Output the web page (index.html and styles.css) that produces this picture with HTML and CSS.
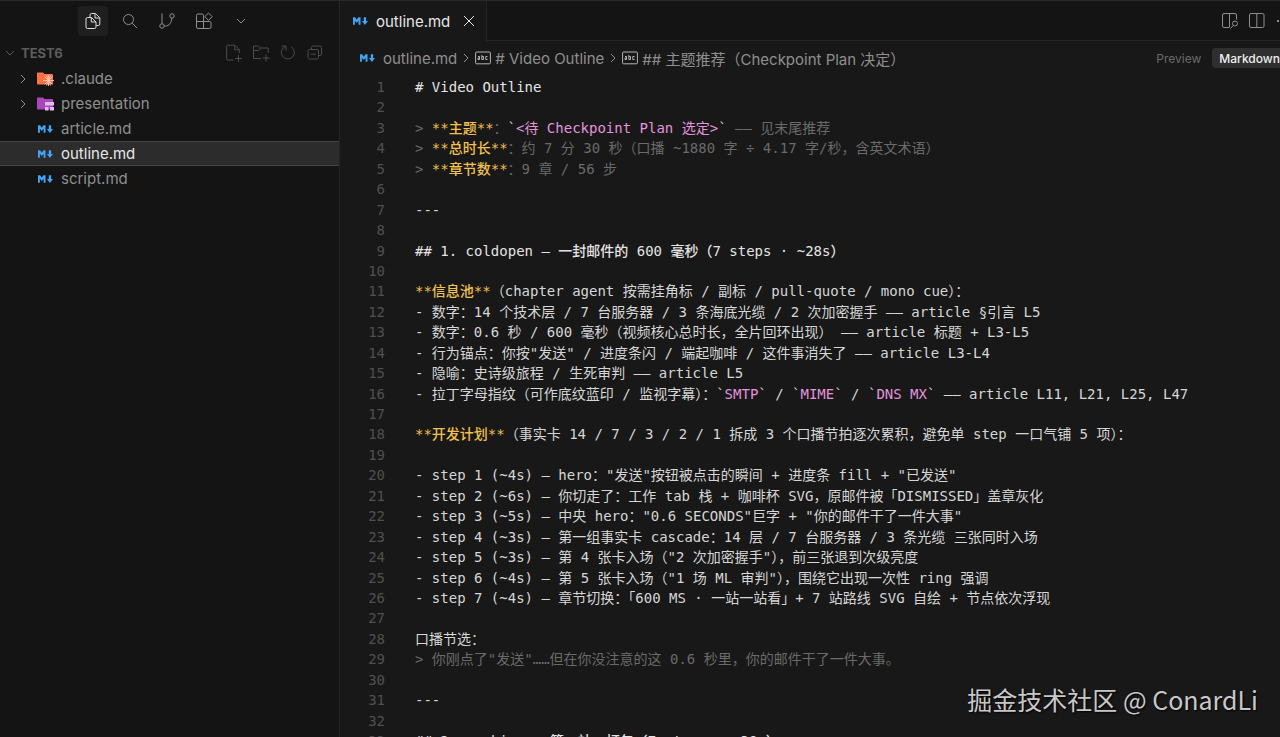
FILE: index.html
```html
<!DOCTYPE html>
<html lang="zh-CN">
<head>
    <meta charset="UTF-8">
    <meta name="viewport" content="width=device-width, initial-scale=1.0">
    <title>outline.md - test6</title>
    <link rel="stylesheet" href="styles.css">
</head>
<body>
    <!-- Shared icons -->
    <svg class="icon-defs" aria-hidden="true">
        <symbol id="icon-md" viewBox="0 0 16 10">
            <path d="M0 9V1h2.2L4 3.6 5.8 1H8v8H6V4.6L4 7.2 2 4.6V9z"/>
            <path d="M11.500 1h2.500v4h2l-3.300 4.200L9.500 5h2z"/>
        </symbol>
        <symbol id="icon-chevron" viewBox="0 0 10 10">
            <path d="M3 1l4 4-4 4"/>
        </symbol>
        <symbol id="icon-abc" viewBox="0 0 16 14">
            <rect x="0.600" y="1" width="14.800" height="11.800" rx="1"/>
            <path d="M3 5.500h1.500v3H3V7h1.500M6.800 4v4.500h1.700v-3H6.800M12.500 5.500h-1.700v3h1.700"/>
        </symbol>
    </svg>

    <div class="workbench">
        <aside class="sidebar">
            <nav class="activity-bar" aria-label="Views">
                <button class="activity active" aria-label="Explorer">
                    <svg class="icon-lg" viewBox="0 0 18 18">
                        <path d="M6 5V3A1.500 1.500 0 0 1 7.500 1.500h4l4.300 4.300V12a1.500 1.500 0 0 1-1.500 1.500h-2M11 1.700v4.300H15.500"/>
                        <path d="M3.500 5.500h4l4.500 4.500v5A1.500 1.500 0 0 1 10.500 16.500h-7A1.500 1.500 0 0 1 2 15V7a1.500 1.500 0 0 1 1.500-1.500zM7.300 5.700V10h4.500"/>
                    </svg>
                </button>
                <button class="activity" aria-label="Search">
                    <svg class="icon-lg" viewBox="0 0 18 18">
                        <circle cx="7.500" cy="7.500" r="5"/>
                        <path d="M11.200 11.200l5 5"/>
                    </svg>
                </button>
                <button class="activity" aria-label="Source Control">
                    <svg class="icon-lg" viewBox="0 0 18 18">
                        <circle cx="4" cy="14" r="2.200"/>
                        <circle cx="14" cy="4" r="2.200"/>
                        <path d="M4 1.500v10.300M6.200 14h1.300C11 14 13.500 11 13.800 6.200"/>
                    </svg>
                </button>
                <button class="activity" aria-label="Extensions">
                    <svg class="icon-lg" viewBox="0 0 18 18">
                        <path d="M8.500 9.500V3.200A1.200 1.200 0 0 0 7.300 2H3A1.500 1.500 0 0 0 1.500 3.500v11.500A1.500 1.500 0 0 0 3 16.500h11.500A1.500 1.500 0 0 0 16 15v-4.300A1.200 1.200 0 0 0 14.800 9.500H1.500M8.500 9.500v7"/>
                        <path d="M13.500 1l3.700 3.700-3.700 3.700-3.700-3.700z"/>
                    </svg>
                </button>
                <button class="activity" aria-label="More views">
                    <svg class="icon-sm chevron-down" viewBox="0 0 10 10"><use href="#icon-chevron"/></svg>
                </button>
            </nav>

            <header class="section-header">
                <svg class="icon-sm chevron-down" viewBox="0 0 10 10"><use href="#icon-chevron"/></svg>
                <h2>TEST6</h2>
                <div class="section-actions">
                    <button aria-label="New File">
                        <svg class="icon-lg" viewBox="0 0 18 18">
                            <path d="M8.500 16H2.700A1 1 0 0 1 1.700 15V2.200a1 1 0 0 1 1-1H10l4.300 4.300V9M9.700 1.500v4.300h4.500M13.500 11v7M10 14.500h7"/>
                        </svg>
                    </button>
                    <button aria-label="New Folder">
                        <svg class="icon-lg" viewBox="0 0 18 18">
                            <path d="M9 14.500H1.500v-12.500h5l2 2h7.700V9M1.500 6.500h5l2-2.500M14 10.500v7M10.500 14h7"/>
                        </svg>
                    </button>
                    <button aria-label="Refresh">
                        <svg class="icon-lg" viewBox="0 0 18 18">
                            <path d="M2.500 2h4.500v4.500M6.800 2.300A6.500 6.500 0 1 0 12 2.800"/>
                        </svg>
                    </button>
                    <button aria-label="Collapse All">
                        <svg class="icon-lg" viewBox="0 0 18 18">
                            <path d="M5.500 5V3.500A1.500 1.500 0 0 1 7 2h7a1.500 1.500 0 0 1 1.500 1.500v6.500A1.500 1.500 0 0 1 14 11.500h-1.500"/>
                            <rect x="2" y="5.500" width="10.500" height="9.500" rx="1.500"/>
                            <path d="M4.500 10.200h5.500"/>
                        </svg>
                    </button>
                </div>
            </header>

            <ul class="file-tree">
                <li>
                    <a href="#claude" class="file">
                        <svg class="icon-sm" viewBox="0 0 10 10"><use href="#icon-chevron"/></svg>
                        <svg class="icon-folder" viewBox="0 0 18 16">
                            <path fill="#ff7043" d="M1.500 1.500h5.500l1.500 1.500h7.500a1 1 0 0 1 1 1v8.500a1 1 0 0 1-1 1H2a1 1 0 0 1-1-1V2z"/>
                            <path stroke="#ffccbc" stroke-width="0.900" d="M12.500 4v11M7 9.500h11M8.600 5.600l7.800 7.800M8.600 13.400l7.800-7.800M10.500 4.500l4 10M14.500 4.500l-4 10"/>
                        </svg>
                        <span>.claude</span>
                    </a>
                </li>
                <li>
                    <a href="#presentation" class="file">
                        <svg class="icon-sm" viewBox="0 0 10 10"><use href="#icon-chevron"/></svg>
                        <svg class="icon-folder" viewBox="0 0 18 16">
                            <path fill="#ab47bc" d="M1.500 1.500h5.500l1.500 1.500h7.500a1 1 0 0 1 1 1v8.500a1 1 0 0 1-1 1H2a1 1 0 0 1-1-1V2z"/>
                            <path fill="#e1bee7" d="M9 6h9v3.500H9zM9 11h3.500v3.500H9zM14 11h4v3.500h-4z"/>
                        </svg>
                        <span>presentation</span>
                    </a>
                </li>
                <li>
                    <a href="#article" class="file leaf">
                        <svg class="icon-md"><use href="#icon-md"/></svg>
                        <span>article.md</span>
                    </a>
                </li>
                <li>
                    <a href="#outline" class="file leaf selected">
                        <svg class="icon-md"><use href="#icon-md"/></svg>
                        <span>outline.md</span>
                    </a>
                </li>
                <li>
                    <a href="#script" class="file leaf">
                        <svg class="icon-md"><use href="#icon-md"/></svg>
                        <span>script.md</span>
                    </a>
                </li>
            </ul>
        </aside>

        <main class="editor">
            <div class="tab-bar">
                <div class="tab">
                    <svg class="icon-md"><use href="#icon-md"/></svg>
                    <span>outline.md</span>
                    <button class="tab-close" aria-label="Close tab">
                        <svg class="icon-close" viewBox="0 0 12 12"><path d="M1 1l10 10M11 1L1 11"/></svg>
                    </button>
                </div>
                <div class="tab-actions">
                    <button aria-label="Open Preview to the Side">
                        <svg class="icon-lg" viewBox="0 0 18 18">
                            <path d="M8 15.500H3A1.500 1.500 0 0 1 1.500 14V3A1.500 1.500 0 0 1 3 1.500h11A1.500 1.500 0 0 1 15.500 3v4.500M8.500 1.500v14M9.500 16.500l2.700-3"/>
                            <circle cx="14" cy="11.500" r="2.500"/>
                        </svg>
                    </button>
                    <button aria-label="Split Editor">
                        <svg class="icon-lg" viewBox="0 0 18 18">
                            <rect x="1.500" y="1.500" width="14.500" height="14" rx="1.500"/>
                            <path d="M8.800 1.500v14"/>
                        </svg>
                    </button>
                    <button aria-label="More Actions">
                        <svg class="icon-lg" viewBox="0 0 18 18">
                            <path class="dots" d="M2 8h2v2H2zM8 8h2v2H8zM14 8h2v2h-2z"/>
                        </svg>
                    </button>
                </div>
            </div>

            <div class="breadcrumbs">
                <svg class="icon-md"><use href="#icon-md"/></svg>
                <a href="#outline" class="crumb-file">outline.md</a>
                <svg class="icon-sm" viewBox="0 0 10 10"><use href="#icon-chevron"/></svg>
                <svg class="icon-abc"><use href="#icon-abc"/></svg>
                <a href="#video-outline"># Video Outline</a>
                <svg class="icon-sm" viewBox="0 0 10 10"><use href="#icon-chevron"/></svg>
                <svg class="icon-abc"><use href="#icon-abc"/></svg>
                <a href="#topic">## 主题推荐（Checkpoint Plan 决定）</a>
                <div class="view-switch">
                    <button>Preview</button>
                    <button class="active">Markdown</button>
                </div>
            </div>

            <div class="code-area">
                <ol class="code">
                    <li><code class="heading"># Video Outline</code></li>
                    <li><code></code></li>
                    <li><code class="quote">&gt; <b>**主题**</b>：<i>`</i><em>&lt;待 Checkpoint Plan 选定&gt;</em><i>`</i> —— 见末尾推荐</code></li>
                    <li><code class="quote">&gt; <b>**总时长**</b>：约 7 分 30 秒（口播 ~1880 字 ÷ 4.17 字/秒，含英文术语）</code></li>
                    <li><code class="quote">&gt; <b>**章节数**</b>：9 章 / 56 步</code></li>
                    <li><code></code></li>
                    <li><code>---</code></li>
                    <li><code></code></li>
                    <li><code class="heading">## 1. coldopen — 一封邮件的 600 毫秒（7 steps · ~28s）</code></li>
                    <li><code></code></li>
                    <li><code><b>**信息池**</b>（chapter agent 按需挂角标 / 副标 / pull-quote / mono cue）：</code></li>
                    <li><code>- 数字：14 个技术层 / 7 台服务器 / 3 条海底光缆 / 2 次加密握手 —— article §引言 L5</code></li>
                    <li><code>- 数字：0.6 秒 / 600 毫秒（视频核心总时长，全片回环出现） —— article 标题 + L3-L5</code></li>
                    <li><code>- 行为锚点：你按"发送" / 进度条闪 / 端起咖啡 / 这件事消失了 —— article L3-L4</code></li>
                    <li><code>- 隐喻：史诗级旅程 / 生死审判 —— article L5</code></li>
                    <li><code>- 拉丁字母指纹（可作底纹蓝印 / 监视字幕）：<i>`</i><em>SMTP</em><i>`</i> / <i>`</i><em>MIME</em><i>`</i> / <i>`</i><em>DNS MX</em><i>`</i> —— article L11, L21, L25, L47</code></li>
                    <li><code></code></li>
                    <li><code><b>**开发计划**</b>（事实卡 14 / 7 / 3 / 2 / 1 拆成 3 个口播节拍逐次累积，避免单 step 一口气铺 5 项）：</code></li>
                    <li><code></code></li>
                    <li><code>- step 1 (~4s) — hero："发送"按钮被点击的瞬间 + 进度条 fill + "已发送"</code></li>
                    <li><code>- step 2 (~6s) — 你切走了：工作 tab 栈 + 咖啡杯 SVG，原邮件被「DISMISSED」盖章灰化</code></li>
                    <li><code>- step 3 (~5s) — 中央 hero："0.6 SECONDS"巨字 + "你的邮件干了一件大事"</code></li>
                    <li><code>- step 4 (~3s) — 第一组事实卡 cascade：14 层 / 7 台服务器 / 3 条光缆 三张同时入场</code></li>
                    <li><code>- step 5 (~3s) — 第 4 张卡入场（"2 次加密握手"），前三张退到次级亮度</code></li>
                    <li><code>- step 6 (~4s) — 第 5 张卡入场（"1 场 ML 审判"），围绕它出现一次性 ring 强调</code></li>
                    <li><code>- step 7 (~4s) — 章节切换：「600 MS · 一站一站看」+ 7 站路线 SVG 自绘 + 节点依次浮现</code></li>
                    <li><code></code></li>
                    <li><code>口播节选：</code></li>
                    <li><code class="quote">&gt; 你刚点了"发送"……但在你没注意的这 0.6 秒里，你的邮件干了一件大事。</code></li>
                    <li><code></code></li>
                    <li><code>---</code></li>
                    <li><code></code></li>
                </ol>
                <!-- next line, cut off by the bottom of the editor -->
                <ol class="code code-rest" start="33">
                    <li><code class="heading">## 2. packing — 第一站：打包（7 steps · ~38s）</code></li>
                </ol>
            </div>

            <p class="watermark">掘金技术社区 @ ConardLi</p>
        </main>
    </div>
</body>
</html>
```

FILE: styles.css
```css
* {
    margin: 0;
    padding: 0;
    box-sizing: border-box;
}

body {
    font-family: Inter, "Noto Sans CJK SC", sans-serif;
    font-size: 15px;
    background: #181818;
    color: #8f8f8f;
}

a {
    color: inherit;
    text-decoration: none;
}

button {
    font: inherit;
    color: inherit;
    background: none;
    border: none;
    cursor: pointer;
}

svg {
    display: block;
    flex: none;
    fill: none;
    stroke: currentColor;
}

.icon-defs {
    display: none;
}

.icon-lg {
    width: 18px;
    height: 18px;
}

.icon-sm {
    width: 10px;
    height: 10px;
}

.icon-close {
    width: 12px;
    height: 12px;
}

.icon-md {
    width: 15px;
    height: 10px;
    fill: #42a5f5;
    stroke: none;
}

.icon-abc {
    width: 16px;
    height: 14px;
    color: #b4b4b4;
}

.icon-folder {
    width: 18px;
    height: 16px;
    stroke: none;
}

.chevron-down {
    transform: rotate(90deg);
}

.dots {
    fill: currentColor;
    stroke: none;
}

.workbench {
    display: flex;
    height: 100vh;
    border-top: 1px solid #2a2a2a;
    overflow: hidden;
}

/* Sidebar */
.sidebar {
    flex: 0 0 340px;
    background: #141414;
    border-right: 1px solid #242424;
}

.activity-bar {
    display: flex;
    justify-content: center;
    gap: 7px;
    padding: 5px 6px 5px 0;
}

.activity {
    display: flex;
    align-items: center;
    justify-content: center;
    width: 30px;
    height: 30px;
    border-radius: 4px;
}

.activity.active {
    background: #1f1f1f;
    color: #dedede;
}

.section-header {
    display: flex;
    align-items: center;
    gap: 6px;
    height: 25px;
    padding: 0 15px 2px 5px;
    color: #5c5c5c;
}

.section-header h2 {
    flex: 1;
    font-size: 13px;
    font-weight: 700;
}

.section-actions {
    display: flex;
    gap: 9px;
    color: #4c4c4c;
}

.file-tree {
    list-style: none;
}

.file {
    display: flex;
    align-items: center;
    gap: 7px;
    height: 25px;
    padding-left: 18px;
}

.file .icon-folder {
    margin-left: 1px;
}

.file.leaf {
    gap: 8px;
    padding-left: 38px;
}

.file.selected {
    background: #2c2c2c;
    border-top: 1px solid #444;
    border-bottom: 1px solid #444;
    color: #e6e6e6;
}

/* Editor */
.editor {
    position: relative;
    flex: 1;
    min-width: 0;
    display: flex;
    flex-direction: column;
}

.tab-bar {
    display: flex;
    height: 40px;
    background: #141414;
}

.tab {
    display: flex;
    align-items: center;
    gap: 8px;
    padding: 0 11px 0 13px;
    background: #181818;
    border-right: 1px solid #242424;
    color: #e6e6e6;
}

.tab-close {
    margin-left: 5px;
}

.tab-actions {
    flex: 1;
    display: flex;
    align-items: center;
    justify-content: flex-end;
    gap: 9px;
    margin-right: -13px;
    border-bottom: 1px solid #242424;
}

.breadcrumbs {
    display: flex;
    align-items: center;
    gap: 4px;
    height: 36px;
    padding: 0 0 2px 20px;
    white-space: nowrap;
}

.crumb-file {
    margin-left: 4px;
}

.view-switch {
    display: flex;
    gap: 4px;
    margin-left: auto;
    margin-right: -7px;
    font-size: 12px;
    color: #6a6a6a;
}

.view-switch button {
    height: 20px;
    padding: 0 7px;
    border-radius: 4px;
}

.view-switch .active {
    background: #2f2f2f;
    color: #f0f0f0;
    font-weight: 500;
}

.code-area {
    flex: 1;
    min-height: 0;
    display: flex;
    flex-direction: column;
    overflow: hidden;
}

.code {
    flex: 1 0 auto;
    display: flex;
    flex-direction: column;
    justify-content: space-between;
    list-style: none;
    counter-reset: line;
    font-family: "DejaVu Sans Mono", "Noto Sans CJK SC", monospace;
    font-size: 14px;
    color: #d6d6d6;
}

.code li {
    display: flex;
    gap: 30px;
    height: 20px;
    line-height: 20px;
    counter-increment: line;
}

.code li::before {
    content: counter(line);
    flex: 0 0 45px;
    text-align: right;
    color: #505050;
}

.code code {
    font-family: inherit;
    white-space: pre;
}

.code-rest {
    flex: 0 0 6px;
    counter-reset: line 32;
    overflow: hidden;
}

.code .heading {
    color: #e4e4e4;
    font-weight: 500;
}

.code .quote {
    color: #6a6a6a;
}

.code b {
    font-weight: 500;
    color: #f0c050;
}

.code em {
    font-style: normal;
    color: #e394dc;
}

.code i {
    font-style: normal;
    color: #d6d6d6;
}

.watermark {
    position: absolute;
    right: 22px;
    bottom: 20px;
    font-family: "Noto Sans CJK SC", sans-serif;
    font-size: 25px;
    line-height: 36px;
    color: #c8c8c8;
    text-shadow: 1px 1px 2px #000;
}
```
